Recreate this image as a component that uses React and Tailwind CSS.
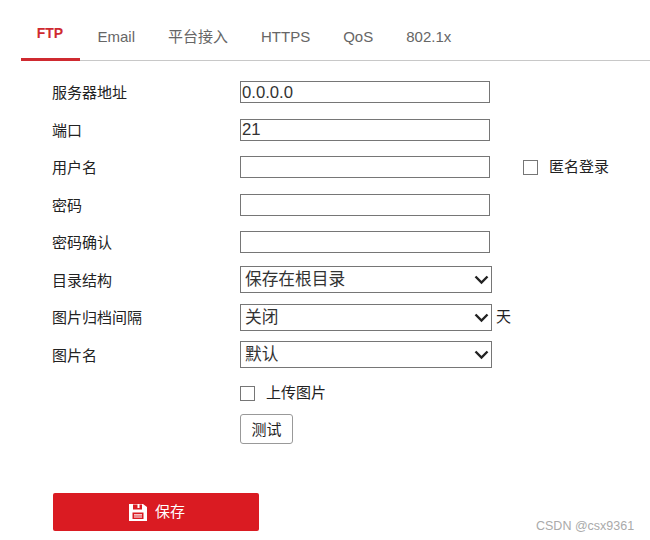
import { useState } from "react";

const font = "font-['Liberation_Sans','Noto_Sans_CJK_SC',sans-serif]";

const tabs = ["Email", "平台接入", "HTTPS", "QoS", "802.1x"];

function Row({ label, children }) {
  return (
    <div className="flex items-center h-[37.5px]">
      <div className="w-[188px] pt-[3px] text-[15px] text-[#222]">{label}</div>
      {children}
    </div>
  );
}

function TextInput({ value = "" }) {
  return (
    <input
      readOnly
      value={value}
      className="w-[250px] h-[22px] border border-[#767676] px-[1px] text-[16.7px] text-[#333] outline-none"
    />
  );
}

function Select({ value }) {
  return (
    <div className="relative w-[252px] h-[27px]">
      <select
        value={value}
        onChange={() => {}}
        className="w-full h-full appearance-none border border-[#767676] bg-white pl-[4px] text-[16.7px] text-[#333] outline-none"
      >
        <option>{value}</option>
      </select>
      <svg
        className="absolute right-[3px] top-[9px] pointer-events-none"
        width="15"
        height="10"
        viewBox="0 0 15 10"
        fill="none"
      >
        <path d="M1.5 1.5 L7.5 7.5 L13.5 1.5" stroke="#222" strokeWidth="2.4" />
      </svg>
    </div>
  );
}

function Check() {
  return <span className="block w-[15px] h-[15px] border border-[#767676] bg-white" />;
}

export default function App() {
  const [active] = useState("FTP");

  return (
    <div className={`relative w-[650px] h-[540px] bg-white overflow-hidden ${font}`}>
      {/* tabs */}
      <div className="flex ml-[21px] h-[61px] border-b border-[#c8c8c8] pt-[10px]">
        <div className="w-[59px] h-[51px] border-b-[3px] border-[#cf2a30] pr-[1px] text-center text-[14px] font-bold text-[#cf2a30] leading-[47px]">
          {active}
        </div>
        <div className="flex gap-[33px] ml-[17.5px] text-[15px] text-[#666] leading-[54px]">
          {tabs.map((t) => (
            <div key={t}>{t}</div>
          ))}
        </div>
      </div>

      {/* form */}
      <div className="ml-[52px] mt-[12.3px]">
        <Row label="服务器地址">
          <TextInput value="0.0.0.0" />
        </Row>
        <Row label="端口">
          <TextInput value="21" />
        </Row>
        <Row label="用户名">
          <TextInput />
          <div className="flex items-center ml-[33px] text-[15px] text-[#222]">
            <Check />
            <span className="ml-[11px]">匿名登录</span>
          </div>
        </Row>
        <Row label="密码">
          <TextInput />
        </Row>
        <Row label="密码确认">
          <TextInput />
        </Row>
        <Row label="目录结构">
          <Select value="保存在根目录" />
        </Row>
        <Row label="图片归档间隔">
          <Select value="关闭" />
          <span className="ml-[4px] text-[15px] text-[#222]">天</span>
        </Row>
        <Row label="图片名">
          <Select value="默认" />
        </Row>
        <div className="flex items-center ml-[188px] mt-[1px] h-[38px] text-[15px] text-[#222]">
          <Check />
          <span className="ml-[11px]">上传图片</span>
        </div>
        <button className="block ml-[188px] mt-[2px] w-[53px] h-[30px] pt-[1px] border border-[#999] rounded-[3px] bg-white text-[15px] text-[#222]">
          测试
        </button>
        <button className="flex items-center justify-center mt-[49px] ml-[1px] pl-[2px] w-[206px] h-[38px] rounded-[2px] bg-[#da1b22] text-[15px] text-white">
          <svg width="18" height="18" viewBox="0 0 18 18" className="mr-[8px]">
            <path
              fillRule="evenodd"
              fill="#fff"
              d="M0 1 H14 L18 4 V18 H0 Z M4 1.5 V6.5 H13 V1.5 H10.5 V5 H8.5 V1.5 Z M3.5 9.5 V16 H14.5 V9.5 Z M5 11.2 H13 V12.4 H5 Z M5 13.4 H13 V14.6 H5 Z"
            />
          </svg>
          保存
        </button>
      </div>

      {/* watermark */}
      <div className="absolute left-[536px] top-[517px] text-[12.5px] text-[#aaa]">
        CSDN @csx9361
      </div>
    </div>
  );
}
